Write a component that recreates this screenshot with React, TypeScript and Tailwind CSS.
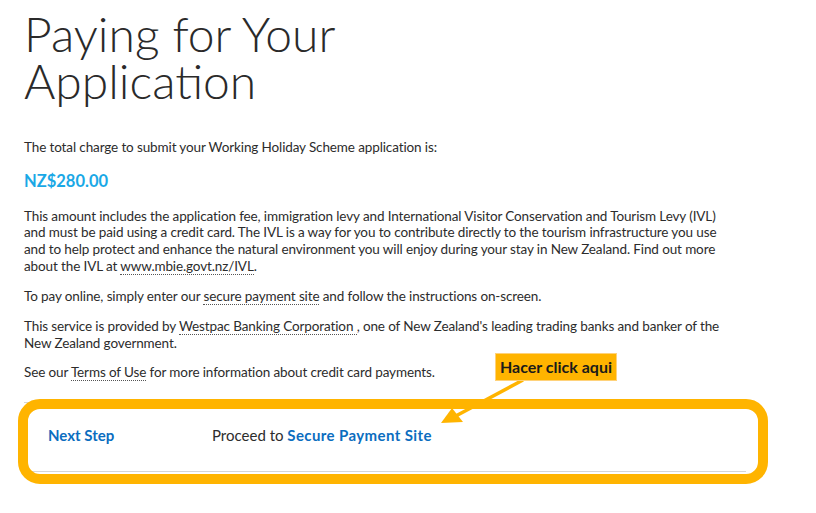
import React from "react";

const body = { fontFamily: "Lato, 'Open Sans', sans-serif" };

function Dotted({ children }: { children: React.ReactNode }) {
    return (
        <a className="border-b border-dotted border-[#555] text-[#2c2c2c]" href="#">
            {children}
        </a>
    );
}

export default function App() {
    return (
        <div className="relative min-h-[513px] w-[816px] bg-white text-[#2c2c2c]" style={body}>
            <div className="w-[746px] pl-6 pt-[10px]">
                <h1 className="text-[48px] leading-[47px] text-[#2a2a2a]" style={{ fontFamily: "Lato, sans-serif", fontWeight: 300 }}>
                    Paying for Your
                    <br />
                    Application
                </h1>

                <div className="mt-[35px] text-[13.5px] leading-[16.7px] tracking-[-0.12px] whitespace-nowrap">
                    <p>The total charge to submit your Working Holiday Scheme application is:</p>

                    <p className="mt-[15px] text-[16.5px] leading-[20px] font-bold tracking-normal text-[#1aa8e6]">NZ$280.00</p>

                    <p className="mt-[17px]">
                        This amount includes the application fee, immigration levy and International Visitor Conservation and Tourism Levy (IVL)
                        <br />
                        and must be paid using a credit card. The IVL is a way for you to contribute directly to the tourism infrastructure you use
                        <br />
                        and to help protect and enhance the natural environment you will enjoy during your stay in New Zealand. Find out more
                        <br />
                        about the IVL at <Dotted>www.mbie.govt.nz/IVL</Dotted>.
                    </p>

                    <p className="mt-[13.3px]">
                        To pay online, simply enter our <Dotted>secure payment site</Dotted> and follow the instructions on-screen.
                    </p>

                    <p className="mt-[13.3px]">
                        This service is provided by <Dotted>Westpac Banking Corporation </Dotted>, one of New Zealand's leading trading banks and banker of the
                        <br />
                        New Zealand government.
                    </p>

                    <p className="mt-[13px]">
                        See our <Dotted>Terms of Use</Dotted> for more information about credit card payments.
                    </p>
                </div>

                <div className="mt-[21px] flex h-[70px] items-center border-y border-[#d6d6d6] pb-[4px] pl-6 text-[15px]">
                    <span className="w-[164px] font-bold text-[#0b6dbf]">Next Step</span>
                    <span>
                        Proceed to{" "}
                        <a href="#" className="font-bold tracking-[0.4px] text-[#0b6dbf]">
                            Secure Payment Site
                        </a>
                    </span>
                </div>
            </div>

            {/* annotation overlay */}
            <div className="pointer-events-none absolute left-[18px] top-[399px] h-[85px] w-[750px] rounded-[22px] border-[10px] border-[#ffb400]" />

            <svg className="pointer-events-none absolute left-0 top-0" width="816" height="513">
                <line x1="523" y1="380" x2="452" y2="418" stroke="#ffb400" strokeWidth="3.5" />
                <polygon points="441,423 452,408 463,422" fill="#ffb400" />
            </svg>

            <div
                className="absolute left-[495px] top-[353px] flex h-[28px] w-[122px] items-center justify-center border border-[#ffd27a] bg-[#ffb400] text-[16px] font-bold text-[#1a1a1a]"
                style={{ fontFamily: "Lato, sans-serif" }}
            >
                Hacer click aqui
            </div>
        </div>
    );
}
